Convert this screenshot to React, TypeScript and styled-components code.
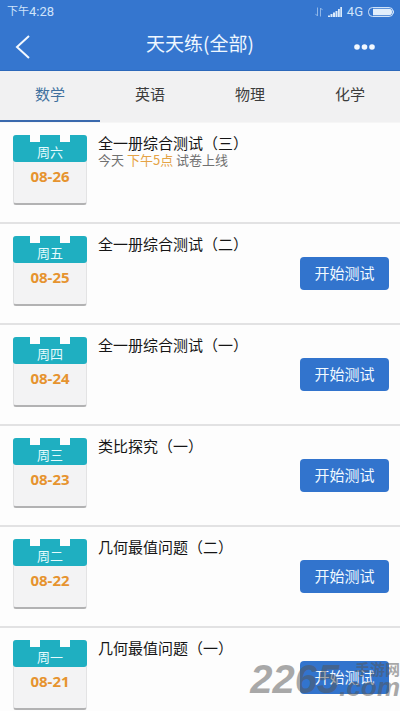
import React from "react";
import styled, { createGlobalStyle } from "styled-components";

const GlobalStyle = createGlobalStyle`
  *, *::before, *::after { box-sizing: border-box; }
  body {
    margin: 0;
    background: #fdfdfd;
    font-family: "Noto Sans CJK SC", "Noto Sans", sans-serif;
  }
  button { font-family: inherit; border: 0; padding: 0; cursor: pointer; }
`;

const Screen = styled.div`
  position: relative;
  display: flex;
  flex-direction: column;
  height: 100vh;
  overflow: hidden;
`;

const TopBar = styled.header`
  flex: none;
  background: #3576cf;
  border-bottom: 1px solid #2c68ba;
  color: #eef7ff;
`;

const StatusBar = styled.div`
  display: flex;
  align-items: center;
  justify-content: space-between;
  height: 24px;
  padding: 0 5px 0 7px;
  font-family: Roboto, "Noto Sans CJK SC", sans-serif;
  font-size: 13px;
  line-height: 24px;
  color: #cfe3fa;
`;

const Clock = styled.span`
  display: flex;
  align-items: center;
`;

const Meridiem = styled.span`
  font-size: 11px;
`;

const Indicators = styled.div`
  display: flex;
  align-items: center;
  gap: 5px;

  svg { display: block; }
`;

const TitleBar = styled.div`
  display: grid;
  grid-template-columns: 48px 1fr 48px;
  align-items: center;
  height: 46px;
`;

const PageTitle = styled.h1`
  margin: 0;
  font-size: 19px;
  font-weight: 400;
  line-height: 38px;
  padding-bottom: 8px;
  text-align: center;
`;

const IconButton = styled.button`
  display: flex;
  align-items: center;
  height: 46px;
  background: none;
  color: #f2f8ff;
`;

const BackButton = styled(IconButton)`
  padding-left: 15px;
`;

const MoreButton = styled(IconButton)`
  padding-left: 2px;
`;

const Tabs = styled.nav`
  flex: none;
  display: flex;
  height: 52px;
  background: #f1f1f2;
  border-bottom: 1px solid #f6f6f6;
`;

const Tab = styled.button<{ $active?: boolean }>`
  flex: 1;
  height: 51px;
  padding-bottom: 4px;
  border-bottom: 2px solid ${(p) => (p.$active ? "#3a69ad" : "transparent")};
  background: none;
  color: ${(p) => (p.$active ? "#41719f" : "#3c3c3c")};
  font-size: 15px;
`;

const List = styled.ul`
  flex: 1;
  min-height: 0;
  margin: 0;
  padding: 0;
  overflow-y: auto;
  scrollbar-width: none;
  list-style: none;
`;

const Row = styled.li`
  display: flex;
  height: 101px;
  padding: 12px 11px 0 13px;
  border-bottom: 2px solid #e2e2e3;
`;

const Calendar = styled.div`
  flex: none;
  width: 74px;
  height: 70px;
  border: 1px solid #e3e3e4;
  border-top: 0;
  border-bottom: 2px solid #b2b2b3;
  border-radius: 3px;
  background: #f3f3f4;
  text-align: center;
`;

const Weekday = styled.div`
  display: flex;
  flex-direction: column;
  height: 27px;
  margin: 0 -1px;
  border-radius: 3px;
  background: #1fafc1;
  color: #e6fbfd;
  font-size: 13px;
  line-height: 20px;
`;

const Notches = styled.div`
  display: flex;
  justify-content: space-between;
  height: 7px;
  padding: 0 17px;

  &::before, &::after {
    content: "";
    width: 10px;
    height: 7px;
    background: #fdfdfd;
  }
`;

const DateText = styled.div`
  color: #e6932f;
  font-family: "Noto Sans", sans-serif;
  font-size: 15px;
  font-weight: 700;
  line-height: 28px;
`;

const Body = styled.div`
  flex: 1;
  min-width: 0;
  padding-left: 11px;
`;

const TestTitle = styled.h2`
  margin: 0;
  color: #151515;
  font-size: 15px;
  font-weight: 400;
  line-height: 16px;
  white-space: nowrap;
`;

const Note = styled.p`
  margin: 0;
  color: #707070;
  font-size: 13px;
  line-height: 18px;
`;

const Highlight = styled.span`
  color: #e5a345;
`;

const StartButton = styled.button`
  flex: none;
  width: 89px;
  height: 33px;
  margin-top: 21px;
  padding-bottom: 2px;
  border-radius: 4px;
  background: #3274cd;
  color: #f1f9ff;
  font-size: 15px;
`;

const Watermark = styled.div`
  position: absolute;
  right: 0;
  bottom: 14px;
  display: flex;
  align-items: flex-end;
  color: #555;
  opacity: 0.5;
  pointer-events: none;
  font-family: "Liberation Sans", sans-serif;
  font-weight: 700;
  font-style: italic;
`;

const WatermarkNumber = styled.span`
  font-size: 40px;
  line-height: 36px;
`;

const WatermarkSite = styled.span`
  display: flex;
  flex-direction: column;
`;

const WatermarkName = styled.span`
  align-self: flex-end;
  font-family: "Noto Sans CJK SC", sans-serif;
  font-size: 15px;
  font-style: normal;
  line-height: 16px;
`;

const WatermarkDomain = styled.span`
  font-size: 26px;
  line-height: 20px;
`;

const SyncIcon = () => (
  <svg width="8" height="10" viewBox="0 0 8 10" fill="none" stroke="#8fb6e8" aria-hidden="true">
    <path d="M2.5 0.5V9L0.3 6.8M5.5 9.5V1L7.7 3.2" />
  </svg>
);

const SignalIcon = () => (
  <svg width="14" height="10" viewBox="0 0 14 10" fill="#dcebfb" aria-hidden="true">
    <path d="M0 8.5h2V10H0zM2.5 7h2v3h-2zM5 5.5h2V10H5zM7.5 4h2v6h-2zM10 2h1.8v8H10zM12.3 0H14v10h-1.7z" />
  </svg>
);

const BatteryIcon = () => (
  <svg width="27" height="10" viewBox="0 0 27 10" aria-hidden="true">
    <rect x="0.5" y="0.5" width="24.5" height="9" rx="4" fill="none" stroke="#cfe2f8" />
    <path d="M5 1.7H21a3 3 0 0 1 3 3v.6a3 3 0 0 1-3 3H5z" fill="#e2eefb" />
    <path d="M25.5 3.5v3" stroke="#cfe2f8" />
  </svg>
);

const BackIcon = () => (
  <svg width="16" height="26" viewBox="0 0 16 26" fill="none" stroke="currentColor" strokeWidth="2" aria-hidden="true">
    <path d="M14 2L2 13L14 24" />
  </svg>
);

const MoreIcon = () => (
  <svg width="22" height="8" viewBox="0 0 22 8" fill="currentColor" aria-hidden="true">
    <circle cx="3" cy="4" r="2.8" />
    <circle cx="10.5" cy="4" r="2.8" />
    <circle cx="18" cy="4" r="2.8" />
  </svg>
);

const subjects = ["数学", "英语", "物理", "化学"];

const tests = [
  { day: "周六", date: "08-26", title: "全一册综合测试（三）", opensAt: "下午5点" },
  { day: "周五", date: "08-25", title: "全一册综合测试（二）" },
  { day: "周四", date: "08-24", title: "全一册综合测试（一）" },
  { day: "周三", date: "08-23", title: "类比探究（一）" },
  { day: "周二", date: "08-22", title: "几何最值问题（二）" },
  { day: "周一", date: "08-21", title: "几何最值问题（一）" },
];

export default function App() {
  const [active, setActive] = React.useState(0);

  return (
    <>
      <GlobalStyle />
      <Screen>
        <TopBar>
          <StatusBar>
            <Clock><Meridiem>下午</Meridiem>4:28</Clock>
            <Indicators>
              <SyncIcon />
              <SignalIcon />
              <span>4G</span>
              <BatteryIcon />
            </Indicators>
          </StatusBar>
          <TitleBar>
            <BackButton aria-label="返回"><BackIcon /></BackButton>
            <PageTitle>天天练(全部)</PageTitle>
            <MoreButton aria-label="更多"><MoreIcon /></MoreButton>
          </TitleBar>
        </TopBar>
        <Tabs>
          {subjects.map((subject, i) => (
            <Tab key={subject} $active={i === active} onClick={() => setActive(i)}>
              {subject}
            </Tab>
          ))}
        </Tabs>
        <List>
          {tests.map((test) => (
            <Row key={test.date}>
              <Calendar>
                <Weekday>
                  <Notches />
                  {test.day}
                </Weekday>
                <DateText>{test.date}</DateText>
              </Calendar>
              <Body>
                <TestTitle>{test.title}</TestTitle>
                {test.opensAt && (
                  <Note>今天 <Highlight>{test.opensAt}</Highlight> 试卷上线</Note>
                )}
              </Body>
              {!test.opensAt && <StartButton>开始测试</StartButton>}
            </Row>
          ))}
        </List>
        <Watermark>
          <WatermarkNumber>2265</WatermarkNumber>
          <WatermarkSite>
            <WatermarkName>手游网</WatermarkName>
            <WatermarkDomain>.com</WatermarkDomain>
          </WatermarkSite>
        </Watermark>
      </Screen>
    </>
  );
}
